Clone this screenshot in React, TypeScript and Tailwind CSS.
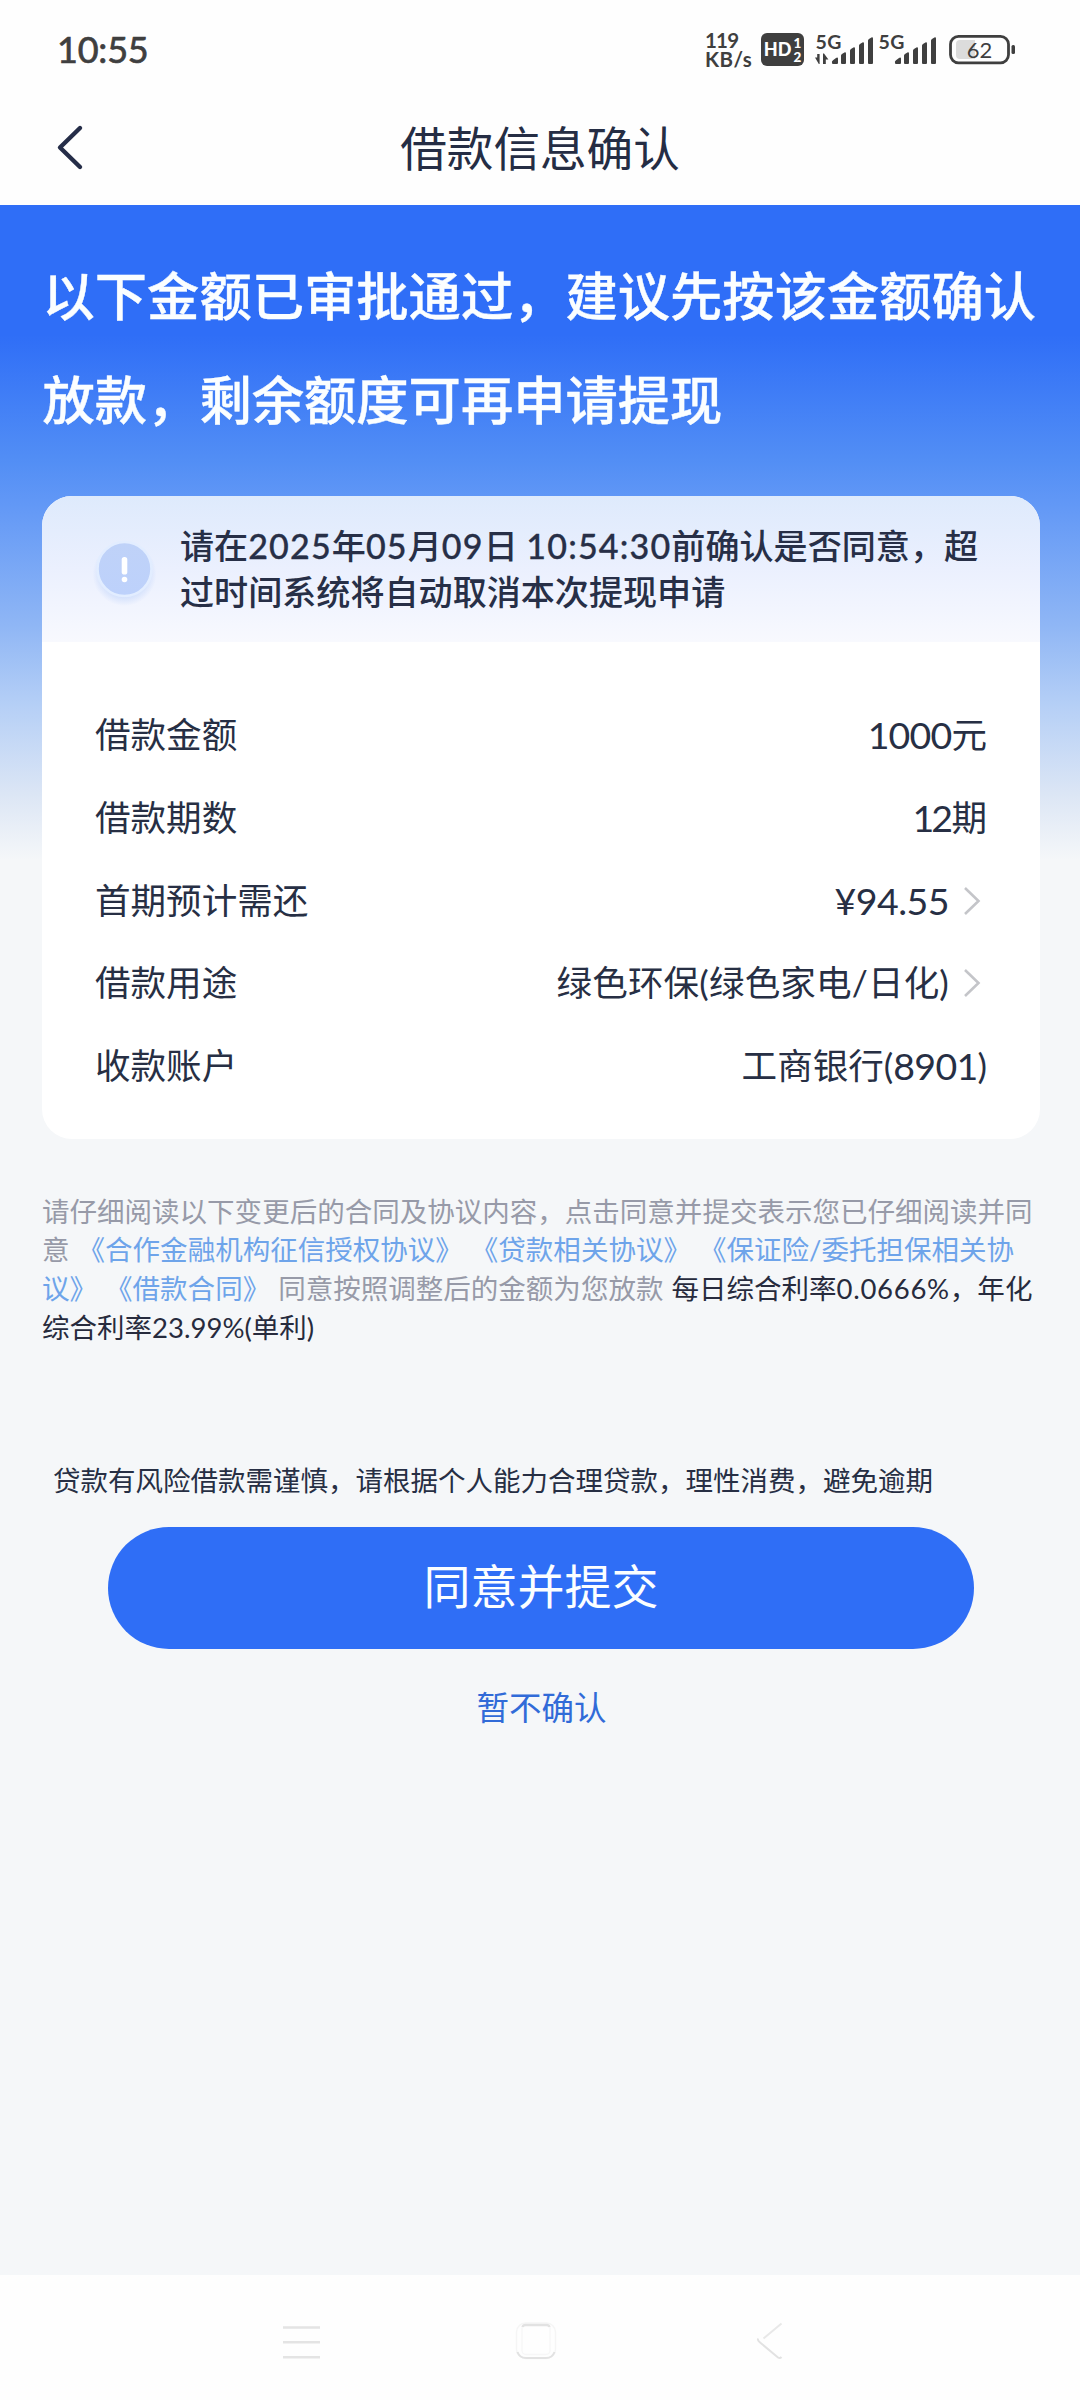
import { ReactNode } from "react";

const BARS = [
  { x: 26, y: 15 },
  { x: 35, y: 10 },
  { x: 44, y: 5 },
  { x: 53, y: 0 },
];

const Signal = ({ arrows }: { arrows?: boolean }) => (
  <svg className="-mt-[6px]" width="60" height="38" viewBox="0 -6 60 38" fill="#3f3f3f">
    <text x="0.500" y="15.500" fontSize="19.500" fontWeight="700" fontFamily="Lato" textLength="26">
      5G
    </text>
    {arrows && <path d="M0 24.500h2.200V21h2.400V31h-.8zM8 31V20.500h1l4.400 6h-2.600V31z" />}
    <path d="M17 30.200q-.6-2 1-3l3-2.200q1.800-1 2 .5v4.500q0 1-1 1h-4q-.8 0-1-.8z" />
    {BARS.map((bar) => (
      <path
        key={bar.x}
        d={`M${bar.x} 30V${bar.y + 7.5}q0-1 1-1.600l2.400-1.500q1.600-.6 1.600 1.200V30q0 1-1 1h-3q-1 0-1-1z`}
      />
    ))}
  </svg>
);

const StatusBar = () => (
  <div className="flex h-[90px] items-start justify-between pt-[33px] pr-[64px] pl-[57px] text-[#3f3f3f]">
    <span className="-mt-[1px] text-[36px] leading-[34px] tracking-[-0.2px] [-webkit-text-stroke:0.7px_#3f3f3f]">
      10:55
    </span>
    <div className="flex items-start">
      <div className="w-[56px] text-[20.500px] leading-[18.500px] font-bold">
        <p className="-mt-[2px] tracking-[-0.800px]">119</p>
        <p className="tracking-[0.500px]">KB/s</p>
      </div>
      <div className="flex h-[33px] w-[43px] items-center justify-center gap-[2px] rounded-[6px] bg-[#3f3f3f] font-black text-white">
        <span className="text-[18px]">HD</span>
        <span className="flex flex-col text-[13.500px] leading-[14px]">
          <span>1</span>
          <span>2</span>
        </span>
      </div>
      <div className="ml-[11px]">
        <Signal arrows />
      </div>
      <div className="ml-[3px]">
        <Signal />
      </div>
      <svg className="ml-[11px]" width="67" height="33" viewBox="0 0 67 33">
        <rect x="1.500" y="3.300" width="58" height="26.500" rx="8" fill="none" stroke="#3f3f3f" strokeWidth="2.800" />
        <path d="M11 7h15v19H11q-4 0-4-4V11q0-4 4-4z" fill="#dcdcdc" />
        <rect x="62.500" y="12" width="3.500" height="9" rx="1.500" fill="#3f3f3f" />
        <text x="30.500" y="24.500" fontSize="22" fontFamily="Lato" textAnchor="middle" fill="#3f3f3f">
          62
        </text>
      </svg>
    </div>
  </div>
);

const TitleBar = () => (
  <header className="relative flex h-[115px] items-center justify-center">
    <svg
      className="absolute top-[34px] left-[55px]"
      width="30"
      height="48"
      viewBox="0 0 30 48"
      fill="none"
      stroke="#252d48"
      strokeWidth="4.400"
      strokeLinecap="round"
      strokeLinejoin="round"
    >
      <path d="M25 4L5 23.500L25 43" />
    </svg>
    <h1 className="text-[46.600px] leading-[60px] text-[#252d44]">借款信息确认</h1>
  </header>
);

// Digits inside the notice are set a little wider and heavier than the text.
const Num = ({ children }: { children: ReactNode }) => (
  <span className="tracking-[1.150px] [-webkit-text-stroke:0.3px_#272f47]">{children}</span>
);

const Notice = () => (
  <div className="flex h-[146px] bg-linear-to-b from-[#deeafc] via-[#ebf0fe] to-[#f8f9fe] pt-[27px] pl-[54px]">
    <svg className="-ml-[4px] mt-[12px] shrink-0" width="66" height="72" viewBox="0 0 66 72">
      <defs>
        <radialGradient id="glow">
          <stop offset="0.6" stopColor="#b9cff9" stopOpacity="0.7" />
          <stop offset="1" stopColor="#b9cff9" stopOpacity="0" />
        </radialGradient>
        <linearGradient id="disc" x1="0" y1="0" x2="0" y2="1">
          <stop offset="0" stopColor="#bfd2f8" />
          <stop offset="1" stopColor="#bdd1fb" />
        </linearGradient>
      </defs>
      <circle cx="32.500" cy="39" r="32" fill="url(#glow)" />
      <circle cx="32.500" cy="34" r="27" fill="url(#disc)" stroke="#e2edff" strokeWidth="2.600" />
      <rect x="29.700" y="22" width="5.600" height="17.500" rx="2.600" fill="#fff" />
      <circle cx="32.500" cy="44.500" r="2.800" fill="#fff" />
    </svg>
    <p className="ml-[22px] text-[34.080px] leading-[45.700px] font-medium whitespace-nowrap text-[#272f47]">
      请在<Num>2025</Num>年<Num>05</Num>月<Num>09</Num>日 <Num>10:54:30</Num>前确认是否同意，超
      <br />
      过时间系统将自动取消本次提现申请
    </p>
  </div>
);

const Chevron = () => (
  <svg
    className="mr-[6px] ml-[14px]"
    width="18"
    height="30"
    viewBox="0 0 18 30"
    fill="none"
    stroke="#c4c5c9"
    strokeWidth="2.600"
  >
    <path d="M2 2L15.500 15L2 28" />
  </svg>
);

interface RowProps {
  label: string;
  link?: boolean;
  children: ReactNode;
}

const Row = ({ label, link, children }: RowProps) => (
  <div className="flex h-[82.700px] items-center justify-between text-[35.550px] leading-[50px] text-[#272f44]">
    <span>{label}</span>
    <span className="flex items-center">
      {children}
      {link && <Chevron />}
    </span>
  </div>
);

const LoanCard = () => (
  <section className="mx-[42px] h-[643px] w-[998px] overflow-hidden rounded-[30px] bg-white">
    <Notice />
    <div className="pt-[52px] pr-[53px] pl-[53px]">
      <Row label="借款金额">
        <span className="text-[37.500px] tracking-[-0.800px]">1000</span>元
      </Row>
      <Row label="借款期数">
        <span className="text-[37.500px] tracking-[-3px]">1</span>
        <span className="text-[37.500px] tracking-[-1.500px]">2</span>期
      </Row>
      <Row label="首期预计需还" link>
        <span className="text-[37.500px] tracking-[-0.500px]">¥94.55</span>
      </Row>
      <Row label="借款用途" link>
        <span className="tracking-[0.150px]">绿色环保(绿色家电/日化)</span>
      </Row>
      <Row label="收款账户">
        工商银行(<span className="text-[37.500px] tracking-[-0.700px]">8901</span>)
      </Row>
    </div>
  </section>
);

const Agreement = () => (
  <div className="mt-[53.500px] ml-[42px] text-[27.530px] leading-[38.700px] whitespace-nowrap text-[#979aa8] [word-spacing:1px]">
    <p>请仔细阅读以下变更后的合同及协议内容，点击同意并提交表示您已仔细阅读并同</p>
    <p>
      意 <span className="text-[#6ea4ea]">《合作金融机构征信授权协议》 《贷款相关协议》 《保证险/委托担保相关协</span>
    </p>
    <p>
      <span className="text-[#6ea4ea]">议》 《借款合同》</span> 同意按照调整后的金额为您放款{" "}
      <span className="text-[#272b3d]">
        每日综合利率<span className="tracking-[0.700px]">0.0666%</span>，年化
      </span>
    </p>
    <p className="text-[#272b3d]">综合利率23.99%(单利)</p>
  </div>
);

const NavBar = () => (
  <nav className="flex h-[125px] items-start bg-[#fefefe] pt-[44px] pl-[281px]" aria-label="system">
    <svg width="40" height="44" viewBox="0 0 40 44" stroke="#e4e4e4" strokeWidth="2.400">
      <path d="M2 8.500h37M2 23.300h37M2 38.300h37" />
    </svg>
    <svg className="ml-[193px]" width="46" height="44" viewBox="0 0 46 44" fill="none">
      <rect x="2.500" y="4" width="39" height="35.500" rx="9" stroke="#f5f5f5" strokeWidth="1.400" />
      <rect x="8" y="5.500" width="28" height="30" rx="4" stroke="#f7f7f7" strokeWidth="1.400" />
      <path d="M8.500 8q.5-2 3-2h21q2.500 0 3 2" stroke="#e2e2e2" strokeWidth="2.400" />
      <path d="M3.500 33q2 6 8.500 6h20q6.500 0 8.500-6" stroke="#e2e2e2" strokeWidth="2" />
    </svg>
    <svg className="ml-[196px]" width="30" height="44" viewBox="0 0 30 44" fill="none" stroke="#e2e2e2" strokeWidth="2">
      <path d="M25.500 4.500L7.500 19.500" stroke="#e8e8e8" />
      <path d="M2 19.500q-.5 2 1.500 3.500L22 38.500q2 1.200 3.500-.5" />
    </svg>
  </nav>
);

export default function App() {
  return (
    <div className="flex h-[2400px] w-[1080px] flex-col overflow-hidden bg-[#f5f7f9] font-['Lato','Noto_Sans_CJK_SC',sans-serif]">
      <div className="bg-[#fefefe]">
        <StatusBar />
        <TitleBar />
      </div>

      <main className="flex-1 bg-[linear-gradient(180deg,#2f6ef7_0px,#2f6ef7_130px,#528ef5_255px,#6298f6_300px,#8fb6f5_420px,#b5cff6_500px,#dce6f5_590px,#f5f7f9_655px)]">
        <h2 className="h-[291px] pt-[38.500px] pl-[42.500px] text-[52.300px] leading-[104.500px] font-medium whitespace-nowrap text-[#fbfeff] [-webkit-text-stroke:0.4px_#fbfeff]">
          以下金额已审批通过，建议先按该金额确认
          <br />
          放款，剩余额度可再申请提现
        </h2>

        <LoanCard />
        <Agreement />

        <p className="mt-[114px] ml-[53px] text-[27.500px] leading-[40px] text-[#272f44]">
          贷款有风险借款需谨慎，请根据个人能力合理贷款，理性消费，避免逾期
        </p>
        <button className="mt-[25.500px] ml-[108px] flex h-[122px] w-[866px] items-center justify-center rounded-full bg-[#2f6ef6] pb-[3px] text-[47px] text-[#fbfeff]">
          同意并提交
        </button>
        <button className="mt-[39px] block w-full pl-[3px] text-center text-[32.500px] leading-[40px] text-[#316bd8]">
          暂不确认
        </button>
      </main>

      <NavBar />
    </div>
  );
}
